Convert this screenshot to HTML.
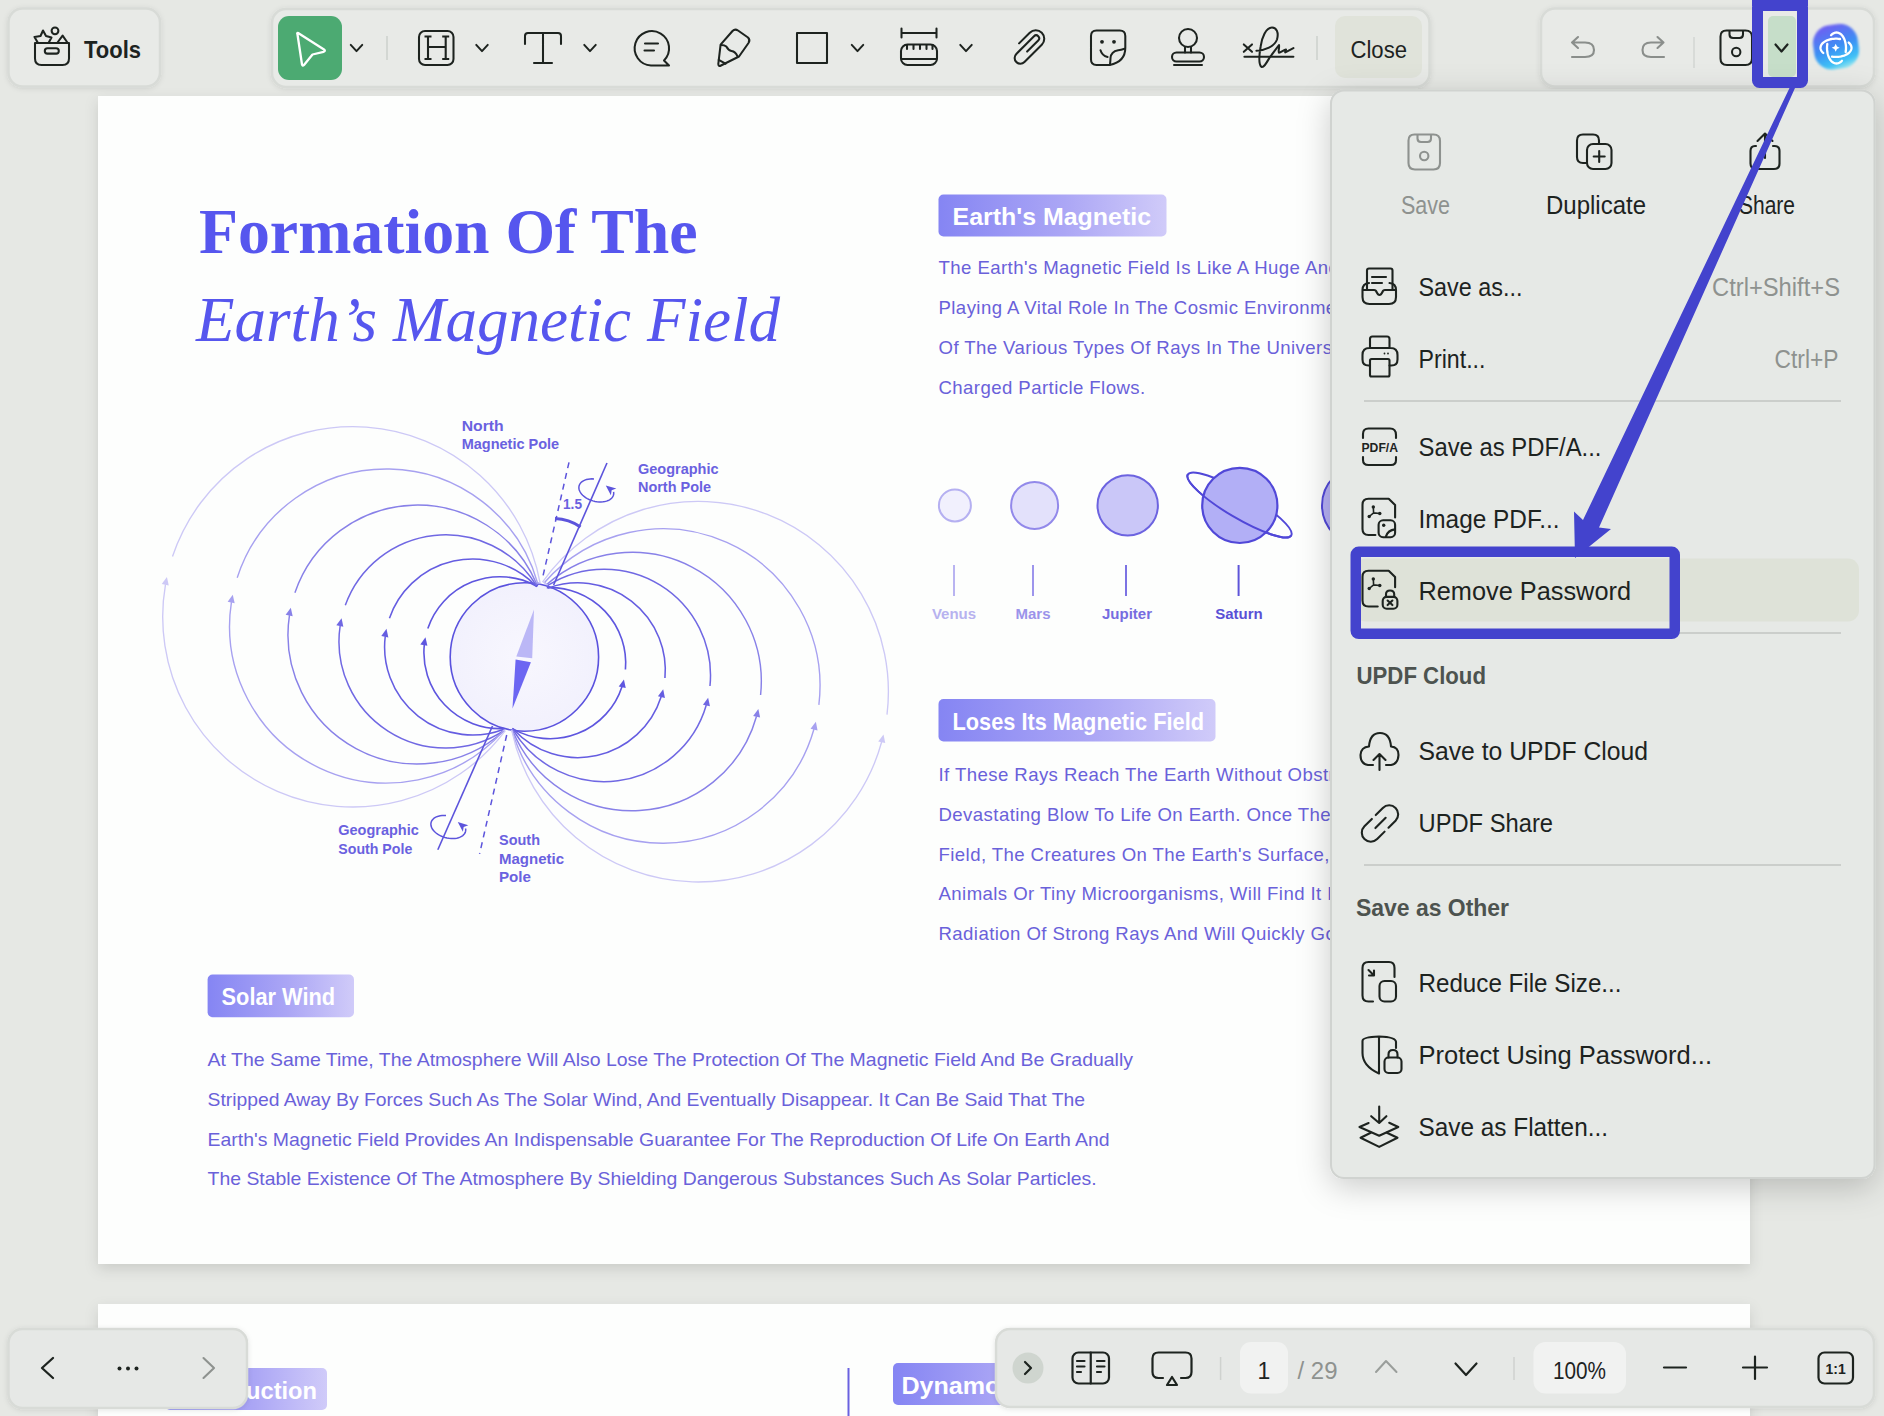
<!DOCTYPE html><html><head><meta charset="utf-8"><style>html,body{margin:0;padding:0;overflow:hidden;background:#e6e8e4;}svg{display:block;}</style></head><body><svg width="1884" height="1416" viewBox="0 0 1884 1416"><defs>
<linearGradient id="taggrad" x1="0" y1="0" x2="1" y2="0">
<stop offset="0" stop-color="#8585f3"/><stop offset="0.55" stop-color="#aba6f5"/><stop offset="1" stop-color="#d0cbf9"/></linearGradient>
<linearGradient id="aigrad" x1="0.35" y1="0" x2="0.6" y2="1">
<stop offset="0" stop-color="#6e5ff2"/><stop offset="0.5" stop-color="#3d8ef4"/><stop offset="0.85" stop-color="#3fc2f6"/><stop offset="1" stop-color="#8fe3f0"/></linearGradient>
<filter id="aiblur" x="-20%" y="-20%" width="140%" height="140%"><feGaussianBlur stdDeviation="0.9"/></filter>
<radialGradient id="earthgrad" cx="0.5" cy="0.5" r="0.5">
<stop offset="0" stop-color="#f8f7fe"/><stop offset="1" stop-color="#f2f1fd"/></radialGradient>
<filter id="tshadow" x="-10%" y="-30%" width="120%" height="160%"><feDropShadow dx="0" dy="1" stdDeviation="2.5" flood-color="#000" flood-opacity="0.10"/></filter>
<filter id="pshadow" x="-5%" y="-5%" width="110%" height="115%"><feDropShadow dx="0" dy="5" stdDeviation="7" flood-color="#000" flood-opacity="0.12"/></filter>
<filter id="mshadow" x="-20%" y="-10%" width="140%" height="120%"><feDropShadow dx="0" dy="8" stdDeviation="16" flood-color="#000" flood-opacity="0.2"/></filter>
</defs><rect x="0" y="0" width="1884" height="1416" fill="#e6e8e4"/>
<rect x="98" y="96" width="1652" height="1168" fill="#fdfefd" filter="url(#pshadow)"/>
<rect x="98" y="1304" width="1652" height="200" fill="#fdfefd" filter="url(#pshadow)"/>
<rect x="8.5" y="8.5" width="151.5" height="78" rx="14" fill="#e8eae7" stroke="#d8dbd7" stroke-width="2.5" filter="url(#tshadow)"/>
<g fill="none" stroke="#1d231f" stroke-width="2.05" stroke-linecap="round" stroke-linejoin="round"><path d="M35,43 H69 V58.5 Q69,65 62.5,65 H41.5 Q35,65 35,58.5 Z"/><rect x="44.8" y="48.3" width="14" height="5.3" rx="2.65"/><path d="M38,43 L34.5,37 L40.5,36 L43,30.5 L46,36 L51.5,37.5 L48.5,43"/><circle cx="55" cy="30.8" r="3.4"/><path d="M57.5,42.5 L62.6,35.6 L67.4,42.5"/></g>
<text x="84" y="58" font-family="'Liberation Sans', sans-serif" font-size="24" font-weight="bold" font-style="normal" fill="#1d231f" text-anchor="start" textLength="57" lengthAdjust="spacingAndGlyphs" >Tools</text>
<rect x="272" y="9" width="1157.5" height="78" rx="14" fill="#e8eae7" stroke="#d8dbd7" stroke-width="2.5" filter="url(#tshadow)"/>
<rect x="278" y="16" width="64" height="64" rx="11" fill="#4caa72"/>
<path d="M297.5,34.5 Q296.5,32.5 298.5,33.2 L324,49.5 Q326,51 323.5,51.8 L312.5,54.5 L304,65 Q302.5,66.5 302,64.5 Z" fill="none" stroke="#ffffff" stroke-width="2.3" stroke-linejoin="round"/>
<path d="M350.75,44.9 L356.5,51.1 L362.25,44.9" fill="none" stroke="#1d231f" stroke-width="2.0" stroke-linecap="round" stroke-linejoin="round"/>
<line x1="387" y1="36" x2="387" y2="60" stroke="#cdd0cd" stroke-width="1.5"/>
<rect x="419" y="31" width="34.5" height="34" rx="6" fill="none" stroke="#1d231f" stroke-width="2.05" stroke-linecap="round" stroke-linejoin="round"/>
<path d="M428,36.5 V59 M445.7,36.5 V59 M424.5,36.5 H431.5 M442.2,36.5 H449.2 M424.5,59 H431.5 M442.2,59 H449.2 M428,47 H445.7" fill="none" stroke="#1d231f" stroke-width="2.1"/>
<path d="M476.25,44.9 L482,51.1 L487.75,44.9" fill="none" stroke="#1d231f" stroke-width="2.0" stroke-linecap="round" stroke-linejoin="round"/>
<path d="M525,44 V36 Q525,33 528,33 H558 Q561,33 561,36 V44 M543,33 V63 M534,63 H552" fill="none" stroke="#1d231f" stroke-width="2.05" stroke-linecap="round" stroke-linejoin="round" stroke-linecap="butt"/>
<path d="M584.25,44.9 L590,51.1 L595.75,44.9" fill="none" stroke="#1d231f" stroke-width="2.0" stroke-linecap="round" stroke-linejoin="round"/>
<path d="M669,65.5 L664,60.5 A17.2,17.2 0 1 0 651,65.5 Z" fill="none" stroke="#1d231f" stroke-width="2.05" stroke-linecap="round" stroke-linejoin="round"/>
<path d="M645,43.5 H658 M644.5,50.5 H654" fill="none" stroke="#1d231f" stroke-width="2.05" stroke-linecap="round" stroke-linejoin="round"/>
<path d="M720.6,44.6 L732.5,31 Q735,28.5 738,30.5 L748,37.5 Q750.5,40 748.5,43 L739,56.5 L721,65.5 Q718.5,66.8 718.3,64 Z" fill="none" stroke="#1d231f" stroke-width="2.05" stroke-linecap="round" stroke-linejoin="round"/>
<path d="M721.2,45 Q724.5,45 726.3,46.6 Q728.5,50.5 731.5,51 Q735.5,51.6 737.4,56.1 M718.7,59.9 L725.5,63.7" fill="none" stroke="#1d231f" stroke-width="2.05" stroke-linecap="round" stroke-linejoin="round"/>
<rect x="797" y="33" width="30" height="30" fill="none" stroke="#1d231f" stroke-width="2.05" stroke-linecap="round" stroke-linejoin="round" stroke-linejoin="miter"/>
<path d="M851.75,44.9 L857.5,51.1 L863.25,44.9" fill="none" stroke="#1d231f" stroke-width="2.0" stroke-linecap="round" stroke-linejoin="round"/>
<path d="M901.5,28.5 V37.5 M936.5,28.5 V37.5 M901.5,33 H936.5" fill="none" stroke="#1d231f" stroke-width="2.05" stroke-linecap="round" stroke-linejoin="round" stroke-linecap="butt"/>
<rect x="901" y="44.5" width="36" height="20.5" rx="6.5" fill="none" stroke="#1d231f" stroke-width="2.05" stroke-linecap="round" stroke-linejoin="round"/>
<path d="M901.5,59 H936.5 M907,45 V49 M913.5,45 V49 M920,45 V49 M926.5,45 V49 M932.5,45 V49" fill="none" stroke="#1d231f" stroke-width="2.05" stroke-linecap="round" stroke-linejoin="round" stroke-linecap="butt"/>
<path d="M960.25,44.9 L966,51.1 L971.75,44.9" fill="none" stroke="#1d231f" stroke-width="2.0" stroke-linecap="round" stroke-linejoin="round"/>
<path d="M-4.6,-10 L10.5,-10 A8.5,8.5 0 0 1 10.5,7 L-14,7 A5.75,5.75 0 0 1 -14,-4.5 L11,-4.5 A3,3 0 0 1 11,1.5 L-4.7,1.5" fill="none" stroke="#1d231f" stroke-width="2.05" stroke-linecap="round" stroke-linejoin="round" transform="translate(1029.4 47.2) rotate(-45)"/>
<path d="M1125.3,47.8 V36 Q1125.3,30.5 1119.8,30.5 H1096.5 Q1091,30.5 1091,36 V59.4 Q1091,64.9 1096.5,64.9 H1109.7 Q1125.3,62 1125.3,47.8 Z" fill="none" stroke="#1d231f" stroke-width="2.05" stroke-linecap="round" stroke-linejoin="round"/>
<path d="M1124.5,48.8 Q1121,50 1118.2,50.2 Q1111,51.5 1110.5,58 Q1110.4,61 1110,64.5" fill="none" stroke="#1d231f" stroke-width="2.05" stroke-linecap="round" stroke-linejoin="round"/>
<circle cx="1102" cy="41.8" r="1.9" fill="#1d231f"/><circle cx="1114" cy="41.8" r="1.9" fill="#1d231f"/>
<path d="M1100.5,50.2 Q1102,55.5 1107.6,57" fill="none" stroke="#1d231f" stroke-width="2.05" stroke-linecap="round" stroke-linejoin="round"/>
<circle cx="1188" cy="38" r="9" fill="none" stroke="#1d231f" stroke-width="2.05" stroke-linecap="round" stroke-linejoin="round"/>
<path d="M1185,47 V52.5 M1191,47 V52.5" fill="none" stroke="#1d231f" stroke-width="2.05" stroke-linecap="round" stroke-linejoin="round"/>
<rect x="1172" y="52.5" width="32" height="9" rx="4.5" fill="none" stroke="#1d231f" stroke-width="2.05" stroke-linecap="round" stroke-linejoin="round"/>
<path d="M1174,65 H1202" fill="none" stroke="#1d231f" stroke-width="2.05" stroke-linecap="round" stroke-linejoin="round" stroke-linecap="butt"/>
<path d="M1243.8,44.4 L1252,51.8 M1252,44.4 L1243.8,51.8" fill="none" stroke="#1d231f" stroke-width="2.05" stroke-linecap="round" stroke-linejoin="round" stroke-width="2" stroke-linecap="butt"/>
<path d="M1244.4,56.8 H1293.4" fill="none" stroke="#1d231f" stroke-width="2.05" stroke-linecap="round" stroke-linejoin="round" stroke-linecap="butt"/>
<path d="M1256.4,50.8 C1265,50.5 1274.5,46.5 1277,39.5 C1279,32.5 1276.5,27.5 1271.9,27.6 C1266,27.8 1262,37 1260.6,46.7 C1259.5,53 1258.5,64 1261.3,66.8 C1263.5,68.5 1267,62 1269.8,57.3 L1279,45 C1279.5,48 1278,52 1279,52.7 C1280,53 1284,50 1286,49.5 C1285.5,51 1285,52.5 1285.3,52.4 L1293.4,48.1" fill="none" stroke="#1d231f" stroke-width="2.05" stroke-linecap="round" stroke-linejoin="round" stroke-width="2"/>
<line x1="1317" y1="36" x2="1317" y2="60" stroke="#cdd0cd" stroke-width="1.5"/>
<rect x="1335" y="16" width="87" height="62" rx="10" fill="#e0e3da"/>
<text x="1350.5" y="57.5" font-family="'Liberation Sans', sans-serif" font-size="23" font-weight="normal" font-style="normal" fill="#1d231f" text-anchor="start" textLength="56.5" lengthAdjust="spacingAndGlyphs" >Close</text>
<rect x="1541" y="8.5" width="333" height="78" rx="14" fill="#e8eae7" stroke="#d8dbd7" stroke-width="2.5" filter="url(#tshadow)"/>
<path d="M1578,37 L1572,42.5 L1578,48 M1572,42.5 H1585 Q1594,42.5 1594,50 Q1594,57 1585,57 H1572" fill="none" stroke="#8a8e8b" stroke-width="2.1" stroke-linecap="round" stroke-linejoin="round"/>
<path d="M1657.5,37 L1663.5,42.5 L1657.5,48 M1663.5,42.5 H1651 Q1642.5,42.5 1642.5,50 Q1642.5,57 1651,57 H1664" fill="none" stroke="#8a8e8b" stroke-width="2.1" stroke-linecap="round" stroke-linejoin="round"/>
<line x1="1694" y1="37" x2="1694" y2="68" stroke="#d3d6d3" stroke-width="1.5"/>
<path d="M1726.5,30.5 H1745.5 Q1752,30.5 1752,37 V58.5 Q1752,65 1745.5,65 H1727 Q1720.5,65 1720.5,58.5 V36.5 Q1720.5,30.5 1726.5,30.5 Z M1729.5,30.5 V34.5 Q1729.5,38 1733,38 H1739.5 Q1743,38 1743,34.5 V30.5" fill="none" stroke="#1d231f" stroke-width="2.05" stroke-linecap="round" stroke-linejoin="round" stroke-width="2.2"/>
<circle cx="1736.2" cy="52" r="4.2" fill="none" stroke="#1d231f" stroke-width="2.05" stroke-linecap="round" stroke-linejoin="round" stroke-width="2.2"/>
<rect x="1768" y="16" width="28" height="61" rx="5" fill="#c6dec9"/>
<path d="M1775.5,44.5 L1781.5,51.5 L1787.5,44.5" fill="none" stroke="#1d231f" stroke-width="2.2" stroke-linecap="round" stroke-linejoin="round"/>
<rect x="1813.5" y="24.5" width="45" height="44.5" rx="18" transform="rotate(-8 1836 46.7)" fill="url(#aigrad)" filter="url(#aiblur)"/>
<path d="M1831.05,35.30 L1831.87,34.47 L1832.74,33.77 L1833.64,33.22 L1834.58,32.82 L1835.53,32.58 L1836.50,32.50 L1837.47,32.58 L1838.42,32.82 L1839.36,33.22 L1840.26,33.77 L1841.13,34.47 L1841.95,35.30 L1842.71,36.27 L1843.41,37.36 L1844.04,38.56 L1844.59,39.86 L1845.05,41.25 L1845.43,42.70 L1845.71,44.21 L1845.90,45.75 L1845.99,47.32 L1845.98,48.90 L1845.88,50.47 L1845.68,52.01 M1841.95,60.70 L1841.13,61.53 L1840.26,62.23 L1839.36,62.78 L1838.42,63.18 L1837.47,63.42 L1836.50,63.50 L1835.53,63.42 L1834.58,63.18 L1833.64,62.78 L1832.74,62.23 L1831.87,61.53 L1831.05,60.70 L1830.29,59.73 L1829.59,58.64 L1828.96,57.44 L1828.41,56.14 L1827.95,54.75 L1827.57,53.30 L1827.29,51.79 L1827.10,50.25 L1827.01,48.68 L1827.02,47.10 L1827.12,45.53 L1827.32,43.99 M1823.30,53.02 L1822.47,52.23 L1821.77,51.40 L1821.22,50.54 L1820.82,49.64 L1820.58,48.72 L1820.50,47.80 L1820.58,46.88 L1820.82,45.96 L1821.22,45.06 L1821.77,44.20 L1822.47,43.37 L1823.30,42.58 L1824.27,41.85 L1825.36,41.18 L1826.56,40.58 L1827.86,40.05 L1829.25,39.61 L1830.70,39.25 L1832.21,38.98 L1833.75,38.80 L1835.32,38.71 L1836.90,38.72 L1838.47,38.82 L1840.01,39.01 M1848.70,42.58 L1849.53,43.37 L1850.23,44.20 L1850.78,45.06 L1851.18,45.96 L1851.42,46.88 L1851.50,47.80 L1851.42,48.72 L1851.18,49.64 L1850.78,50.54 L1850.23,51.40 L1849.53,52.23 L1848.70,53.02 L1847.73,53.75 L1846.64,54.42 L1845.44,55.02 L1844.14,55.55 L1842.75,55.99 L1841.30,56.35 L1839.79,56.62 L1838.25,56.80 L1836.68,56.89 L1835.10,56.88 L1833.53,56.78 L1831.99,56.59" fill="none" stroke="#ffffff" stroke-width="2.3" stroke-linecap="round"/>
<path d="M1835.7,43.7 L1837,46.4 L1839.7,47.7 L1837,49 L1835.7,51.7 L1834.4,49 L1831.7,47.7 L1834.4,46.4 Z" fill="#ffffff"/>
<text x="199" y="253" font-family="'Liberation Serif', serif" font-size="64" font-weight="bold" font-style="normal" fill="#5656ee" text-anchor="start" textLength="498.5" lengthAdjust="spacingAndGlyphs" >Formation Of The</text>
<text x="196" y="341" font-family="'Liberation Serif', serif" font-size="64" font-weight="normal" font-style="italic" fill="#5656ee" text-anchor="start" textLength="584" lengthAdjust="spacingAndGlyphs" >Earth’s Magnetic Field</text>
<rect x="938.5" y="194.5" width="228" height="42" rx="5" fill="url(#taggrad)"/>
<text x="952.5" y="225.3" font-family="'Liberation Sans', sans-serif" font-size="24" font-weight="bold" font-style="normal" fill="#ffffff" text-anchor="start" textLength="198.5" lengthAdjust="spacingAndGlyphs" >Earth's Magnetic</text>
<text x="938.5" y="274.3" font-family="'Liberation Sans', sans-serif" font-size="18.6" font-weight="normal" font-style="normal" fill="#6a61da" text-anchor="start" letter-spacing="0.42">The Earth's Magnetic Field Is Like A Huge And Powerful Protective Shield,</text>
<text x="938.5" y="314.3" font-family="'Liberation Sans', sans-serif" font-size="18.6" font-weight="normal" font-style="normal" fill="#6a61da" text-anchor="start" letter-spacing="0.42">Playing A Vital Role In The Cosmic Environment And Resisting The Intrusion</text>
<text x="938.5" y="354.3" font-family="'Liberation Sans', sans-serif" font-size="18.6" font-weight="normal" font-style="normal" fill="#6a61da" text-anchor="start" letter-spacing="0.42">Of The Various Types Of Rays In The Universe And The Invasion Of</text>
<text x="938.5" y="394.3" font-family="'Liberation Sans', sans-serif" font-size="18.6" font-weight="normal" font-style="normal" fill="#6a61da" text-anchor="start" letter-spacing="0.42">Charged Particle Flows.</text>
<rect x="938.5" y="699" width="277" height="42.4" rx="5" fill="url(#taggrad)"/>
<text x="952.5" y="729.8" font-family="'Liberation Sans', sans-serif" font-size="24" font-weight="bold" font-style="normal" fill="#ffffff" text-anchor="start" textLength="251.5" lengthAdjust="spacingAndGlyphs" >Loses Its Magnetic Field</text>
<text x="938.5" y="780.9" font-family="'Liberation Sans', sans-serif" font-size="18.6" font-weight="normal" font-style="normal" fill="#6a61da" text-anchor="start" letter-spacing="0.42">If These Rays Reach The Earth Without Obstruction, It Will Deal A</text>
<text x="938.5" y="820.75" font-family="'Liberation Sans', sans-serif" font-size="18.6" font-weight="normal" font-style="normal" fill="#6a61da" text-anchor="start" letter-spacing="0.42">Devastating Blow To Life On Earth. Once The Earth Loses Its Magnetic</text>
<text x="938.5" y="860.6" font-family="'Liberation Sans', sans-serif" font-size="18.6" font-weight="normal" font-style="normal" fill="#6a61da" text-anchor="start" letter-spacing="0.42">Field, The Creatures On The Earth's Surface, Whether Plants,</text>
<text x="938.5" y="900.45" font-family="'Liberation Sans', sans-serif" font-size="18.6" font-weight="normal" font-style="normal" fill="#6a61da" text-anchor="start" letter-spacing="0.42">Animals Or Tiny Microorganisms, Will Find It Difficult To Survive The</text>
<text x="938.5" y="940.3" font-family="'Liberation Sans', sans-serif" font-size="18.6" font-weight="normal" font-style="normal" fill="#6a61da" text-anchor="start" letter-spacing="0.42">Radiation Of Strong Rays And Will Quickly Go Extinct.</text>
<rect x="207.6" y="974.6" width="146.4" height="42.6" rx="5" fill="url(#taggrad)"/>
<text x="221.6" y="1004.5" font-family="'Liberation Sans', sans-serif" font-size="24" font-weight="bold" font-style="normal" fill="#ffffff" text-anchor="start" textLength="113.5" lengthAdjust="spacingAndGlyphs" >Solar Wind</text>
<text x="207.6" y="1065.9" font-family="'Liberation Sans', sans-serif" font-size="18.6" font-weight="normal" font-style="normal" fill="#6a61da" text-anchor="start" textLength="925.4" lengthAdjust="spacingAndGlyphs" >At The Same Time, The Atmosphere Will Also Lose The Protection Of The Magnetic Field And Be Gradually</text>
<text x="207.6" y="1105.7" font-family="'Liberation Sans', sans-serif" font-size="18.6" font-weight="normal" font-style="normal" fill="#6a61da" text-anchor="start" textLength="877.4" lengthAdjust="spacingAndGlyphs" >Stripped Away By Forces Such As The Solar Wind, And Eventually Disappear. It Can Be Said That The</text>
<text x="207.6" y="1145.5" font-family="'Liberation Sans', sans-serif" font-size="18.6" font-weight="normal" font-style="normal" fill="#6a61da" text-anchor="start" textLength="902" lengthAdjust="spacingAndGlyphs" >Earth's Magnetic Field Provides An Indispensable Guarantee For The Reproduction Of Life On Earth And</text>
<text x="207.6" y="1185.3000000000002" font-family="'Liberation Sans', sans-serif" font-size="18.6" font-weight="normal" font-style="normal" fill="#6a61da" text-anchor="start" textLength="889" lengthAdjust="spacingAndGlyphs" >The Stable Existence Of The Atmosphere By Shielding Dangerous Substances Such As Solar Particles.</text>
<g stroke-width="2">
<line x1="954" y1="565" x2="954" y2="596" stroke="#b9b4f1"/>
<line x1="1033" y1="565" x2="1033" y2="596" stroke="#9d95ec"/>
<line x1="1126" y1="565" x2="1126" y2="596" stroke="#7c73e3"/>
<line x1="1238.6" y1="565" x2="1238.6" y2="596" stroke="#5e55d9"/>
</g>
<circle cx="954.9" cy="505.4" r="16" fill="#f1f0fd" stroke="#b5b0f1" stroke-width="2"/>
<circle cx="1034.6" cy="505.4" r="23.5" fill="#e3e1fb" stroke="#9289ea" stroke-width="2"/>
<circle cx="1127.7" cy="505.4" r="30.2" fill="#cac7f8" stroke="#6c63e0" stroke-width="2"/>
<ellipse cx="1239.5" cy="505" rx="60" ry="13" transform="rotate(30.5 1239.5 505)" fill="none" stroke="#5148d8" stroke-width="2"/>
<circle cx="1239.8" cy="505.4" r="37.6" fill="#b2aff6" stroke="#5148d8" stroke-width="2.2"/>
<path d="M-60,0 A60,13 0 0 0 60,0" transform="translate(1239.5 505) rotate(30.5)" fill="none" stroke="#5148d8" stroke-width="2"/>
<circle cx="1362" cy="505.4" r="40" fill="#b7b2f6" stroke="#5148d8" stroke-width="2"/>
<text x="954" y="619.4" font-family="'Liberation Sans', sans-serif" font-size="15" font-weight="bold" font-style="normal" fill="#b7b2ef" text-anchor="middle" >Venus</text>
<text x="1033" y="619.4" font-family="'Liberation Sans', sans-serif" font-size="15" font-weight="bold" font-style="normal" fill="#9b93ea" text-anchor="middle" >Mars</text>
<text x="1127" y="619.4" font-family="'Liberation Sans', sans-serif" font-size="15" font-weight="bold" font-style="normal" fill="#766de0" text-anchor="middle" >Jupiter</text>
<text x="1239" y="619.4" font-family="'Liberation Sans', sans-serif" font-size="15" font-weight="bold" font-style="normal" fill="#5a50d6" text-anchor="middle" >Saturn</text>
<rect x="165" y="1368" width="162" height="42" rx="5" fill="url(#taggrad)"/>
<text x="179" y="1398.6" font-family="'Liberation Sans', sans-serif" font-size="24" font-weight="bold" font-style="normal" fill="#ffffff" text-anchor="start" textLength="138" lengthAdjust="spacingAndGlyphs" >Introduction</text>
<line x1="848.5" y1="1368" x2="848.5" y2="1416" stroke="#6a62e0" stroke-width="2"/>
<rect x="893" y="1363" width="200" height="42" rx="5" fill="url(#taggrad)"/>
<text x="901.4" y="1393.6" font-family="'Liberation Sans', sans-serif" font-size="24" font-weight="bold" font-style="normal" fill="#ffffff" text-anchor="start" textLength="99" lengthAdjust="spacingAndGlyphs" >Dynamo</text>
<circle cx="524.4" cy="657" r="74.2" fill="url(#earthgrad)" stroke="#5a52de" stroke-width="1.6"/>
<path d="M538.50,583.00 L536.70,586.24 A75.95,75.95 0 0 0 427.81,628.60 M424.32,644.70 A75.95,75.95 0 0 0 503.43,728.52 L503.50,730.00" fill="none" stroke="#5e56df" stroke-width="1.6"/>
<path d="M425.47,637.30 L427.38,645.86 L420.33,644.40 Z" fill="#5e56df"/>
<path d="M538.50,583.00 L535.73,585.69 A88.00,88.00 0 0 0 389.45,618.19 M385.26,636.26 A88.00,88.00 0 0 0 503.30,729.47 L503.50,730.00" fill="none" stroke="#655de1" stroke-width="1.55"/>
<path d="M386.49,628.87 L388.36,637.44 L381.32,635.95 Z" fill="#655de1"/>
<path d="M538.50,583.00 L535.85,584.67 A106.60,106.60 0 0 0 345.30,605.30 M340.19,625.50 A106.60,106.60 0 0 0 503.92,730.64 L503.50,730.00" fill="none" stroke="#7068e3" stroke-width="1.5"/>
<path d="M341.57,618.13 L343.34,626.72 L336.31,625.15 Z" fill="#7068e3"/>
<path d="M538.50,583.00 L536.55,583.83 A129.45,129.45 0 0 0 294.92,592.78 M289.48,615.05 A129.45,129.45 0 0 0 504.13,730.70 L503.50,730.00" fill="none" stroke="#8881e8" stroke-width="1.45"/>
<path d="M290.82,607.67 L292.68,616.25 L285.64,614.75 Z" fill="#8881e8"/>
<path d="M538.50,583.00 L537.66,583.24 A157.00,157.00 0 0 0 237.19,577.76 M231.43,602.07 A157.00,157.00 0 0 0 503.90,730.35 L503.50,730.00" fill="none" stroke="#a7a1f0" stroke-width="1.4"/>
<path d="M232.75,594.69 L234.69,603.25 L227.63,601.81 Z" fill="#a7a1f0"/>
<path d="M538.50,583.00 L540.02,582.72 A190.20,190.20 0 0 0 172.49,556.56 M165.50,584.28 A190.20,190.20 0 0 0 504.94,731.08 L503.50,730.00" fill="none" stroke="#cdc9f6" stroke-width="1.35"/>
<path d="M166.93,576.92 L168.77,585.50 L161.73,583.99 Z" fill="#cdc9f6"/>
<path d="M547.50,585.00 L547.59,587.64 A75.55,75.55 0 0 1 625.43,669.50 M621.96,686.63 A75.55,75.55 0 0 1 512.91,728.89 L512.00,730.50" fill="none" stroke="#5e56df" stroke-width="1.6"/>
<path d="M623.93,679.40 L625.73,687.99 L618.70,686.44 Z" fill="#5e56df"/>
<path d="M547.50,585.00 L548.53,587.88 A87.40,87.40 0 0 1 664.95,678.00 M661.24,696.54 A87.40,87.40 0 0 1 513.42,729.20 L512.00,730.50" fill="none" stroke="#655de1" stroke-width="1.55"/>
<path d="M663.19,689.30 L664.95,697.89 L657.93,696.32 Z" fill="#655de1"/>
<path d="M547.50,585.00 L547.80,585.48 A106.20,106.20 0 0 1 709.97,686.00 M706.30,704.97 A106.20,106.20 0 0 1 513.11,729.84 L512.00,730.50" fill="none" stroke="#7068e3" stroke-width="1.5"/>
<path d="M708.13,697.70 L709.97,706.28 L702.93,704.77 Z" fill="#7068e3"/>
<path d="M547.50,585.00 L546.93,584.35 A129.20,129.20 0 0 1 760.59,695.00 M756.53,716.28 A129.20,129.20 0 0 1 512.47,730.31 L512.00,730.50" fill="none" stroke="#8881e8" stroke-width="1.45"/>
<path d="M758.34,709.00 L760.15,717.58 L753.12,716.05 Z" fill="#8881e8"/>
<path d="M547.50,585.00 L544.55,582.42 A157.20,157.20 0 0 1 818.87,704.80 M813.99,729.06 A157.20,157.20 0 0 1 512.03,730.49 L512.00,730.50" fill="none" stroke="#a7a1f0" stroke-width="1.4"/>
<path d="M815.87,721.80 L817.55,730.41 L810.54,728.77 Z" fill="#a7a1f0"/>
<path d="M547.50,585.00 L542.82,581.69 A190.30,190.30 0 0 1 887.00,714.70 M881.69,741.77 A190.30,190.30 0 0 1 511.81,730.54 L512.00,730.50" fill="none" stroke="#cdc9f6" stroke-width="1.35"/>
<path d="M883.52,734.50 L885.23,743.10 L878.22,741.49 Z" fill="#cdc9f6"/>
<path d="M534,609.4 L516.3,656.4 L532.2,658.3 Z" fill="#bbb7f6"/>
<path d="M515.6,659.6 L530.9,662.2 L512.5,708.6 Z" fill="#6c66f2"/>
<line x1="607" y1="463" x2="553.6" y2="585" stroke="#5c54dc" stroke-width="1.6"/>
<line x1="492.5" y1="726" x2="437.8" y2="849.8" stroke="#5c54dc" stroke-width="1.6"/>
<line x1="569" y1="462.3" x2="542.3" y2="579" stroke="#5c54dc" stroke-width="1.5" stroke-dasharray="6,5"/>
<line x1="506.7" y1="735" x2="479.6" y2="853.8" stroke="#5c54dc" stroke-width="1.5" stroke-dasharray="6,5"/>
<path d="M555,518.5 Q569,519 580.5,527" fill="none" stroke="#5c54dc" stroke-width="3.2"/>
<g transform="rotate(15 596.3 490.4)"><path d="M591.10,479.88 L589.14,480.33 L587.28,480.92 L585.54,481.64 L583.96,482.47 L582.54,483.42 L581.31,484.47 L580.29,485.59 L579.49,486.78 L578.92,488.02 L578.59,489.30 L578.50,490.59 L578.66,491.87 L579.06,493.14 L579.70,494.37 L580.57,495.54 L581.65,496.65 L582.93,497.66 L584.40,498.58 L586.03,499.39 L587.81,500.07 L589.70,500.62 L591.68,501.02 L593.72,501.28 L595.80,501.40 L597.89,501.36 L599.96,501.17 L601.97,500.83 L603.91,500.34 L605.74,499.73 L607.44,498.98 L608.99,498.11 L610.36,497.14 L611.55,496.08 L612.52,494.94 L613.26,493.73 L613.78,492.48 L614.05,491.20 L614.08,489.91 L613.87,488.63 L613.41,487.37" fill="none" stroke="#5c54dc" stroke-width="1.5"/><path d="M604.16,483.20 L615.18,483.45 L611.10,486.32 L611.64,491.29 Z" fill="#5c54dc"/></g>
<g transform="rotate(15 448.3 827.0)"><path d="M443.10,816.48 L441.14,816.93 L439.28,817.52 L437.54,818.24 L435.96,819.07 L434.54,820.02 L433.31,821.07 L432.29,822.19 L431.49,823.38 L430.92,824.62 L430.59,825.90 L430.50,827.19 L430.66,828.47 L431.06,829.74 L431.70,830.97 L432.57,832.14 L433.65,833.25 L434.93,834.26 L436.40,835.18 L438.03,835.99 L439.81,836.67 L441.70,837.22 L443.68,837.62 L445.72,837.88 L447.80,838.00 L449.89,837.96 L451.96,837.77 L453.97,837.43 L455.91,836.94 L457.74,836.33 L459.44,835.58 L460.99,834.71 L462.36,833.74 L463.55,832.68 L464.52,831.54 L465.26,830.33 L465.78,829.08 L466.05,827.80 L466.08,826.51 L465.87,825.23 L465.41,823.97" fill="none" stroke="#5c54dc" stroke-width="1.5"/><path d="M456.16,819.80 L467.18,820.05 L463.10,822.92 L463.64,827.89 Z" fill="#5c54dc"/></g>
<text x="461.7" y="430.7" font-family="'Liberation Sans', sans-serif" font-size="15" font-weight="bold" font-style="normal" fill="#6a61e0" text-anchor="start" textLength="42" lengthAdjust="spacingAndGlyphs" >North</text>
<text x="461.7" y="448.6" font-family="'Liberation Sans', sans-serif" font-size="15" font-weight="bold" font-style="normal" fill="#6a61e0" text-anchor="start" textLength="97.5" lengthAdjust="spacingAndGlyphs" >Magnetic Pole</text>
<text x="638" y="473.6" font-family="'Liberation Sans', sans-serif" font-size="15" font-weight="bold" font-style="normal" fill="#6a61e0" text-anchor="start" textLength="80.5" lengthAdjust="spacingAndGlyphs" >Geographic</text>
<text x="638" y="491.6" font-family="'Liberation Sans', sans-serif" font-size="15" font-weight="bold" font-style="normal" fill="#6a61e0" text-anchor="start" textLength="73" lengthAdjust="spacingAndGlyphs" >North Pole</text>
<text x="338.3" y="835" font-family="'Liberation Sans', sans-serif" font-size="15" font-weight="bold" font-style="normal" fill="#6a61e0" text-anchor="start" textLength="80.5" lengthAdjust="spacingAndGlyphs" >Geographic</text>
<text x="338.3" y="853.8" font-family="'Liberation Sans', sans-serif" font-size="15" font-weight="bold" font-style="normal" fill="#6a61e0" text-anchor="start" textLength="74" lengthAdjust="spacingAndGlyphs" >South Pole</text>
<text x="499" y="844.7" font-family="'Liberation Sans', sans-serif" font-size="15" font-weight="bold" font-style="normal" fill="#6a61e0" text-anchor="start" textLength="41" lengthAdjust="spacingAndGlyphs" >South</text>
<text x="499" y="863.8" font-family="'Liberation Sans', sans-serif" font-size="15" font-weight="bold" font-style="normal" fill="#6a61e0" text-anchor="start" textLength="65" lengthAdjust="spacingAndGlyphs" >Magnetic</text>
<text x="499" y="881.7" font-family="'Liberation Sans', sans-serif" font-size="15" font-weight="bold" font-style="normal" fill="#6a61e0" text-anchor="start" textLength="32" lengthAdjust="spacingAndGlyphs" >Pole</text>
<text x="563" y="509.4" font-family="'Liberation Sans', sans-serif" font-size="15" font-weight="bold" font-style="normal" fill="#6a61e0" text-anchor="start" textLength="19" lengthAdjust="spacingAndGlyphs" >1.5</text>
<rect x="1331" y="90.5" width="543.5" height="1087.5" rx="13" fill="#e6e9e6" stroke="#d0d3d0" stroke-width="2" filter="url(#mshadow)"/>
<path d="M1414.5,134.5 H1433.5 Q1440,134.5 1440,141 V163 Q1440,169.5 1433.5,169.5 H1415 Q1408.5,169.5 1408.5,163 V140.5 Q1408.5,134.5 1414.5,134.5 Z M1417.5,134.5 V138.5 Q1417.5,142 1421,142 H1427.5 Q1431,142 1431,138.5 V134.5" fill="none" stroke="#8e928f" stroke-width="2.1" stroke-linecap="round" stroke-linejoin="round"/>
<circle cx="1424.2" cy="156" r="4.2" fill="none" stroke="#8e928f" stroke-width="2.1" stroke-linecap="round" stroke-linejoin="round"/>
<text x="1401" y="214" font-family="'Liberation Sans', sans-serif" font-size="25" font-weight="normal" font-style="normal" fill="#8e928f" text-anchor="start" textLength="49" lengthAdjust="spacingAndGlyphs" >Save</text>
<path d="M1586,163 H1583 Q1577,163 1577,157 V140.5 Q1577,134.5 1583,134.5 H1593 Q1599,134.5 1599,140.5 V143" fill="none" stroke="#1d231f" stroke-width="2.1" stroke-linecap="round" stroke-linejoin="round"/>
<rect x="1587" y="144" width="24.5" height="25" rx="6" fill="none" stroke="#1d231f" stroke-width="2.1" stroke-linecap="round" stroke-linejoin="round"/>
<path d="M1599.2,151 V162 M1593.7,156.5 H1604.7" fill="none" stroke="#1d231f" stroke-width="2.1" stroke-linecap="round" stroke-linejoin="round"/>
<text x="1546" y="213.8" font-family="'Liberation Sans', sans-serif" font-size="25" font-weight="normal" font-style="normal" fill="#1d231f" text-anchor="start" textLength="100" lengthAdjust="spacingAndGlyphs" >Duplicate</text>
<path d="M1756,146 H1755 Q1750.5,146 1750.5,151 V163.5 Q1750.5,169 1756,169 H1774 Q1779.5,169 1779.5,163.5 V151 Q1779.5,146 1774.5,146 H1773" fill="none" stroke="#1d231f" stroke-width="2.1" stroke-linecap="round" stroke-linejoin="round"/>
<path d="M1765,158 V134 M1757.5,141 L1765,133.5 L1772.5,141" fill="none" stroke="#1d231f" stroke-width="2.1" stroke-linecap="round" stroke-linejoin="round"/>
<text x="1739" y="214" font-family="'Liberation Sans', sans-serif" font-size="25" font-weight="normal" font-style="normal" fill="#1d231f" text-anchor="start" textLength="56" lengthAdjust="spacingAndGlyphs" >Share</text>
<rect x="1355" y="558.5" width="504" height="63" rx="11" fill="#dee2d8"/>
<line x1="1364" y1="401" x2="1841" y2="401" stroke="#cbcecb" stroke-width="2"/>
<line x1="1364" y1="633" x2="1841" y2="633" stroke="#cbcecb" stroke-width="2"/>
<line x1="1364" y1="865" x2="1841" y2="865" stroke="#cbcecb" stroke-width="2"/>
<text x="1418.5" y="296" font-family="'Liberation Sans', sans-serif" font-size="25.5" font-weight="normal" font-style="normal" fill="#1d231f" text-anchor="start" textLength="104" lengthAdjust="spacingAndGlyphs" >Save as...</text>
<text x="1418.5" y="368" font-family="'Liberation Sans', sans-serif" font-size="25.5" font-weight="normal" font-style="normal" fill="#1d231f" text-anchor="start" textLength="67" lengthAdjust="spacingAndGlyphs" >Print...</text>
<text x="1418.5" y="456" font-family="'Liberation Sans', sans-serif" font-size="25.5" font-weight="normal" font-style="normal" fill="#1d231f" text-anchor="start" textLength="183" lengthAdjust="spacingAndGlyphs" >Save as PDF/A...</text>
<text x="1418.5" y="527.5" font-family="'Liberation Sans', sans-serif" font-size="25.5" font-weight="normal" font-style="normal" fill="#1d231f" text-anchor="start" textLength="141" lengthAdjust="spacingAndGlyphs" >Image PDF...</text>
<text x="1418.5" y="600" font-family="'Liberation Sans', sans-serif" font-size="25.5" font-weight="normal" font-style="normal" fill="#1d231f" text-anchor="start" textLength="212.5" lengthAdjust="spacingAndGlyphs" >Remove Password</text>
<text x="1418.5" y="760" font-family="'Liberation Sans', sans-serif" font-size="25.5" font-weight="normal" font-style="normal" fill="#1d231f" text-anchor="start" textLength="229.5" lengthAdjust="spacingAndGlyphs" >Save to UPDF Cloud</text>
<text x="1418.5" y="831.7" font-family="'Liberation Sans', sans-serif" font-size="25.5" font-weight="normal" font-style="normal" fill="#1d231f" text-anchor="start" textLength="134.5" lengthAdjust="spacingAndGlyphs" >UPDF Share</text>
<text x="1418.5" y="992" font-family="'Liberation Sans', sans-serif" font-size="25.5" font-weight="normal" font-style="normal" fill="#1d231f" text-anchor="start" textLength="203" lengthAdjust="spacingAndGlyphs" >Reduce File Size...</text>
<text x="1418.5" y="1064" font-family="'Liberation Sans', sans-serif" font-size="25.5" font-weight="normal" font-style="normal" fill="#1d231f" text-anchor="start" textLength="293.5" lengthAdjust="spacingAndGlyphs" >Protect Using Password...</text>
<text x="1418.5" y="1136" font-family="'Liberation Sans', sans-serif" font-size="25.5" font-weight="normal" font-style="normal" fill="#1d231f" text-anchor="start" textLength="189.5" lengthAdjust="spacingAndGlyphs" >Save as Flatten...</text>
<text x="1712" y="296" font-family="'Liberation Sans', sans-serif" font-size="25" font-weight="normal" font-style="normal" fill="#8e928f" text-anchor="start" textLength="128" lengthAdjust="spacingAndGlyphs" >Ctrl+Shift+S</text>
<text x="1774.5" y="368" font-family="'Liberation Sans', sans-serif" font-size="25" font-weight="normal" font-style="normal" fill="#8e928f" text-anchor="start" textLength="64" lengthAdjust="spacingAndGlyphs" >Ctrl+P</text>
<text x="1356.5" y="684" font-family="'Liberation Sans', sans-serif" font-size="24" font-weight="bold" font-style="normal" fill="#4d534f" text-anchor="start" textLength="129.5" lengthAdjust="spacingAndGlyphs" >UPDF Cloud</text>
<text x="1356" y="916" font-family="'Liberation Sans', sans-serif" font-size="24" font-weight="bold" font-style="normal" fill="#4d534f" text-anchor="start" textLength="153" lengthAdjust="spacingAndGlyphs" >Save as Other</text>
<path d="M1369,283 Q1362.5,283.5 1362.5,290 V297 Q1362.5,304 1369.5,304 H1389 Q1396,304 1396,297 V290 Q1396,283.5 1389.5,283 M1362.5,290 H1374 Q1376,290 1376.5,292 Q1379.5,298 1382.5,292 Q1383,290 1385,290 H1396" fill="none" stroke="#1d231f" stroke-width="2.1" stroke-linecap="round" stroke-linejoin="round"/>
<path d="M1367,289 V270.5 Q1367,268.5 1369,268.5 H1390.5 Q1392.5,268.5 1392.5,270.5 V289 M1372,277 H1386 M1372,283 H1382" fill="none" stroke="#1d231f" stroke-width="2.1" stroke-linecap="round" stroke-linejoin="round"/>
<path d="M1370,348 V339 Q1370,336.5 1372.5,336.5 H1387 Q1389.5,336.5 1389.5,339 V348 M1370,365.5 H1368.5 Q1362.5,365.5 1362.5,359.5 V355 Q1362.5,348 1369.5,348 H1390.5 Q1397.5,348 1397.5,355 V359.5 Q1397.5,365.5 1391.5,365.5 H1389.5" fill="none" stroke="#1d231f" stroke-width="2.1" stroke-linecap="round" stroke-linejoin="round"/>
<rect x="1370" y="359" width="19.5" height="17.5" rx="1.5" fill="none" stroke="#1d231f" stroke-width="2.1" stroke-linecap="round" stroke-linejoin="round"/>
<circle cx="1384.5" cy="353.5" r="0.9" fill="#1d231f"/><circle cx="1388" cy="353.5" r="0.9" fill="#1d231f"/>
<path d="M1363,438 V434 Q1363,428.5 1368.5,428.5 H1390 Q1396,428.5 1396,435 V438 M1363,457 V460 Q1363,465 1368.5,465 H1391 Q1396,465 1396,460 V457" fill="none" stroke="#1d231f" stroke-width="2.1" stroke-linecap="round" stroke-linejoin="round"/>
<text x="1361.5" y="452" font-family="'Liberation Sans', sans-serif" font-size="12.5" font-weight="bold" font-style="normal" fill="#1d231f" text-anchor="start" textLength="36.5" lengthAdjust="spacingAndGlyphs" >PDF/A</text>
<path d="M1375.4,535.0 H1368.5 Q1362.5,535.0 1362.5,529.0 V504.7 Q1362.5,498.7 1368.5,498.7 H1388.7 L1395.1,505.09999999999997 V517.5" fill="none" stroke="#1d231f" stroke-width="2.1" stroke-linecap="round" stroke-linejoin="round"/>
<path d="M1373.6,512.9 L1373.3,506.9 M1373.6,512.9 L1379.8,513.5 M1373.6,512.9 L1369.1999999999998,516.5" fill="none" stroke="#1d231f" stroke-width="1.6" stroke-linecap="round"/>
<circle cx="1373.3" cy="506.9" r="1.7" fill="#1d231f"/><circle cx="1379.8" cy="513.5" r="1.7" fill="#1d231f"/><circle cx="1369.1999999999998" cy="516.5" r="1.7" fill="#1d231f"/>
<rect x="1378.6" y="520.3" width="16.5" height="16.9" rx="4.5" fill="none" stroke="#1d231f" stroke-width="2.1" stroke-linecap="round" stroke-linejoin="round"/>
<circle cx="1383.7" cy="525.3" r="1.7" fill="#1d231f"/><path d="M1386,536.3 Q1388,530.2 1395,529.4" fill="none" stroke="#1d231f" stroke-width="2.1" stroke-linecap="round" stroke-linejoin="round"/>
<path d="M1377.7,606.5 H1368.5 Q1362.5,606.5 1362.5,600.5 V576.7 Q1362.5,570.7 1368.5,570.7 H1388.7 L1395.1,577.1 V587.2" fill="none" stroke="#1d231f" stroke-width="2.1" stroke-linecap="round" stroke-linejoin="round"/>
<path d="M1373.6,584.9000000000001 L1373.3,578.9000000000001 M1373.6,584.9000000000001 L1379.8,585.5000000000001 M1373.6,584.9000000000001 L1369.1999999999998,588.5000000000001" fill="none" stroke="#1d231f" stroke-width="1.6" stroke-linecap="round"/>
<circle cx="1373.3" cy="578.9000000000001" r="1.7" fill="#1d231f"/><circle cx="1379.8" cy="585.5000000000001" r="1.7" fill="#1d231f"/><circle cx="1369.1999999999998" cy="588.5000000000001" r="1.7" fill="#1d231f"/>
<rect x="1382.7" y="596.9000000000001" width="14.7" height="11.9" rx="4" fill="none" stroke="#1d231f" stroke-width="2.1" stroke-linecap="round" stroke-linejoin="round"/>
<path d="M1386,596.7 V594.2 Q1386,590.5 1390,590.5 Q1394.2,590.5 1394.2,594.2 V596.7 M1387.6,600.5 L1392.4,605.1 M1392.4,600.5 L1387.6,605.1" fill="none" stroke="#1d231f" stroke-width="2.1" stroke-linecap="round" stroke-linejoin="round" stroke-width="1.9"/>
<path d="M1373,765 H1368 Q1360.5,764 1360.5,755 Q1361,747 1369,746.5 Q1370,733 1380,733 Q1390,733 1391,746.5 Q1398.5,747 1398.5,755 Q1398,764 1391,765 H1386" fill="none" stroke="#1d231f" stroke-width="2.1" stroke-linecap="round" stroke-linejoin="round"/>
<path d="M1379.5,770 V754 M1373.5,760 L1379.5,754 L1385.5,760" fill="none" stroke="#1d231f" stroke-width="2.1" stroke-linecap="round" stroke-linejoin="round"/>
<g transform="translate(1380 823.5) rotate(-45)"><path d="M3,-9 H13 A9,9 0 0 1 13,9 H3 M-2.5,9 H-13 A9,9 0 0 1 -13,-9 H-2.5 M-6.5,0 H8" fill="none" stroke="#1d231f" stroke-width="2.1" stroke-linecap="round" stroke-linejoin="round"/></g>
<path d="M1373,1001.5 H1368.5 Q1362.5,1001.5 1362.5,995.5 V968 Q1362.5,962 1368.5,962 H1389 Q1394.5,962 1394.5,968 V977" fill="none" stroke="#1d231f" stroke-width="2.1" stroke-linecap="round" stroke-linejoin="round"/>
<rect x="1379.5" y="981" width="16.5" height="20.5" rx="5" fill="none" stroke="#1d231f" stroke-width="2.1" stroke-linecap="round" stroke-linejoin="round"/>
<path d="M1368.5,970 L1374,975.5 M1374,970.5 V975.5 H1369" fill="none" stroke="#1d231f" stroke-width="2.1" stroke-linecap="round" stroke-linejoin="round" stroke-width="1.9"/>
<path d="M1379,1036.5 Q1362.5,1037 1362.5,1041 V1053 Q1362.5,1066 1379,1073.5 V1036.5 Q1396,1037 1396,1042 V1048" fill="none" stroke="#1d231f" stroke-width="2.1" stroke-linecap="round" stroke-linejoin="round"/>
<rect x="1384.5" y="1057.5" width="17" height="15.5" rx="4" fill="none" stroke="#1d231f" stroke-width="2.1" stroke-linecap="round" stroke-linejoin="round"/>
<path d="M1388.5,1057.5 V1054.5 Q1388.5,1050 1393,1050 Q1397.5,1050 1397.5,1054.5 V1057.5" fill="none" stroke="#1d231f" stroke-width="2.1" stroke-linecap="round" stroke-linejoin="round"/>
<path d="M1368.6,1123 L1359.5,1127 L1379.2,1135.7 L1398.3,1127 L1389.2,1122.8" fill="none" stroke="#1d231f" stroke-width="2.1" stroke-linecap="round" stroke-linejoin="round"/>
<path d="M1370.8,1132.7 L1360.6,1137.8 L1379.2,1146.9 L1397.5,1137.8 L1386.9,1132.7" fill="none" stroke="#1d231f" stroke-width="2.1" stroke-linecap="round" stroke-linejoin="round"/>
<path d="M1379.2,1106.5 V1122.5 M1371.2,1116.2 L1379.2,1123 L1386.4,1116.2" fill="none" stroke="#1d231f" stroke-width="2.1" stroke-linecap="round" stroke-linejoin="round"/>
<rect x="1757.5" y="5.5" width="45" height="77" rx="2" fill="none" stroke="#4343cd" stroke-width="11"/>
<rect x="1752" y="-2" width="56" height="8" fill="#4343cd"/>
<rect x="1355.75" y="551.8" width="319" height="82" rx="3" fill="none" stroke="#4343cd" stroke-width="10.5"/>
<path d="M1789.5,88 L1795,88 L1599,527.5 L1611,529 L1575,558 L1574,511.5 L1583,520 Z" fill="#4343cd"/>
<rect x="8.5" y="1329" width="238.5" height="79" rx="14" fill="#e6e8e6" stroke="#d8dbd7" stroke-width="2.5" filter="url(#tshadow)"/>
<path d="M53,1358 L42,1368 L53,1378" fill="none" stroke="#1d231f" stroke-width="2.3" stroke-linecap="round" stroke-linejoin="round"/>
<circle cx="119.5" cy="1368.5" r="2" fill="#1d231f"/><circle cx="128" cy="1368.5" r="2" fill="#1d231f"/><circle cx="136.5" cy="1368.5" r="2" fill="#1d231f"/>
<path d="M203.5,1358 L214,1368 L203.5,1378" fill="none" stroke="#8e928f" stroke-width="2.1" stroke-linecap="round" stroke-linejoin="round"/>
<rect x="996" y="1329" width="878" height="78" rx="14" fill="#e6e8e6" stroke="#d8dbd7" stroke-width="2.5" filter="url(#tshadow)"/>
<circle cx="1028" cy="1368" r="15.5" fill="#cfd5cf"/>
<path d="M1025,1362 L1031,1368 L1025,1374" fill="none" stroke="#1d231f" stroke-width="2.2" stroke-linecap="round" stroke-linejoin="round"/>
<rect x="1072.5" y="1352.5" width="36.5" height="31" rx="6" fill="none" stroke="#1d231f" stroke-width="2.2" stroke-linecap="round" stroke-linejoin="round"/>
<path d="M1090.75,1352.5 V1383.5 M1077,1361 H1084.5 M1077,1366.5 H1084.5 M1077,1372 H1081 M1097,1361 H1104.5 M1097,1366.5 H1104.5 M1097,1372 H1101" fill="none" stroke="#1d231f" stroke-width="2.2" stroke-linecap="round" stroke-linejoin="round" stroke-width="2"/>
<path d="M1163,1378 H1158.5 Q1152.5,1378 1152.5,1372 V1358.5 Q1152.5,1352.5 1158.5,1352.5 H1185.5 Q1191.5,1352.5 1191.5,1358.5 V1372 Q1191.5,1378 1185.5,1378 H1181" fill="none" stroke="#1d231f" stroke-width="2.2" stroke-linecap="round" stroke-linejoin="round"/>
<path d="M1172,1377 L1167,1385 H1177 Z" fill="none" stroke="#1d231f" stroke-width="2.2" stroke-linecap="round" stroke-linejoin="round"/>
<line x1="1220.6" y1="1357" x2="1220.6" y2="1380" stroke="#cfd2cf" stroke-width="1.5"/>
<rect x="1240" y="1342" width="48" height="51.5" rx="11" fill="#f1f2f1"/>
<text x="1264" y="1379" font-family="'Liberation Sans', sans-serif" font-size="23" font-weight="normal" font-style="normal" fill="#1d231f" text-anchor="middle" >1</text>
<text x="1297.5" y="1379" font-family="'Liberation Sans', sans-serif" font-size="23" font-weight="normal" font-style="normal" fill="#8e928f" text-anchor="start" textLength="40" lengthAdjust="spacingAndGlyphs" >/ 29</text>
<path d="M1376,1372 L1386,1361 L1396.5,1372" fill="none" stroke="#9a9e9b" stroke-width="2" stroke-linecap="round" stroke-linejoin="round"/>
<path d="M1455.5,1363.5 L1466,1375 L1476.5,1363.5" fill="none" stroke="#1d231f" stroke-width="2.2" stroke-linecap="round" stroke-linejoin="round"/>
<line x1="1514" y1="1357" x2="1514" y2="1380" stroke="#cfd2cf" stroke-width="1.5"/>
<rect x="1533.5" y="1342" width="92.5" height="51.5" rx="12" fill="#f1f2f1"/>
<text x="1553" y="1378.5" font-family="'Liberation Sans', sans-serif" font-size="23" font-weight="normal" font-style="normal" fill="#1d231f" text-anchor="start" textLength="53" lengthAdjust="spacingAndGlyphs" >100%</text>
<path d="M1664,1367.5 H1686" fill="none" stroke="#1d231f" stroke-width="2.2" stroke-linecap="round" stroke-linejoin="round"/>
<path d="M1743,1367.5 H1767 M1755,1356.5 V1379" fill="none" stroke="#1d231f" stroke-width="2.2" stroke-linecap="round" stroke-linejoin="round"/>
<rect x="1818.5" y="1352.5" width="34.5" height="31" rx="6" fill="none" stroke="#1d231f" stroke-width="2.2" stroke-linecap="round" stroke-linejoin="round"/>
<text x="1835.7" y="1374" font-family="'Liberation Sans', sans-serif" font-size="14" font-weight="bold" font-style="normal" fill="#1d231f" text-anchor="middle" >1:1</text></svg></body></html>
